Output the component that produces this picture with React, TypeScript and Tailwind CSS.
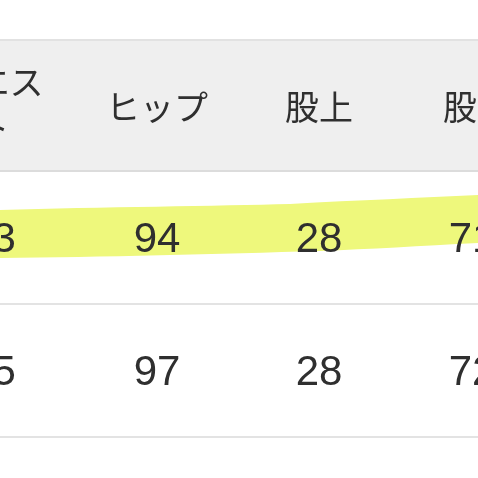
import React from "react";

const cols = "grid grid-cols-[165px_164px_160px_156px]";

export default function App() {
  const header = [
    <span key="a" className="block leading-[45px] -mt-[6px]">ウエス<br />ト</span>,
    "ヒップ",
    "股上",
    "股下",
  ];
  const rows = [
    ["73", "94", "28", "71"],
    ["75", "97", "28", "72"],
  ];
  return (
    <div className="w-[478px] h-[478px] overflow-hidden bg-white relative text-[#2f2f2f]">
      <div className="h-[39px] bg-white" />
      <div className="ml-[-90px] w-[700px]">
        <div className={`${cols} h-[133px] bg-[#efefef] border-t-2 border-b-2 border-t-[#e2e2e2] border-b-[#dcdcdc]`}
          style={{ fontFamily: '"Noto Sans CJK JP", "Noto Sans", sans-serif' }}>
          {header.map((h, i) => (
            <div key={i} className="flex items-center justify-center text-[34px] text-center leading-none">
              {h}
            </div>
          ))}
        </div>
        {rows.map((r, ri) => (
          <div key={ri} className={`${cols} relative h-[133px] border-b-2 border-[#e3e3e3]`}
            style={{ fontFamily: '"Liberation Sans", Arial, sans-serif' }}>
            {ri === 0 && (
              <svg className="absolute left-[90px] top-0 w-[478px] h-[131px] mix-blend-multiply" viewBox="0 0 478 131">
                <path d="M0 38 C 100 35, 220 34, 290 32 C 360 28, 420 26, 478 23 L 478 71 C 420 74, 370 77, 320 79 C 220 82, 100 85, 0 86 Z" fill="#eef87c" />
              </svg>
            )}
            {r.map((v, i) => (
              <div key={i} className={`relative flex items-center justify-center text-[42px] leading-none ${i === 3 ? "pr-[10px]" : ""}`}>
                {v}
              </div>
            ))}
          </div>
        ))}
      </div>
    </div>
  );
}
